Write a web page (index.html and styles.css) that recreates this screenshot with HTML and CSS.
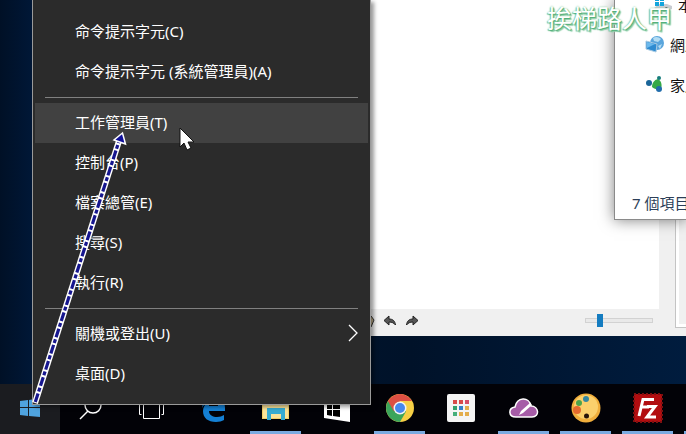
FILE: index.html
```
<!DOCTYPE html>
<html lang="zh-Hant">

<head>
    <meta charset="UTF-8">
    <meta name="viewport" content="width=device-width, initial-scale=1.0">
    <title>desktop</title>
    <link rel="stylesheet" href="styles.css">
</head>

<body>
    <main class="desktop">
        <!-- editor window -->
        <section class="window editor">
            <div class="editor-main">
                <div class="canvas"></div>
                <div class="toolbar">
                    <button class="tool" aria-label="pen">
                        <svg width="14" height="14" viewBox="0 0 14 14"><path d="M5 1l5 1 3 4-3 7-3-1 2-5z" fill="#b9a985" stroke="#333" /></svg>
                    </button>
                    <button class="tool" aria-label="undo">
                        <svg width="14" height="14" viewBox="0 0 14 14"><path d="M1 6.500L6 2v3c4 0 6 2 6.500 6C11 9 9 8 6 8v3z" fill="#555" stroke="#222" /></svg>
                    </button>
                    <button class="tool" aria-label="redo">
                        <svg width="14" height="14" viewBox="0 0 14 14"><path d="M13 6.500L8 2v3c-4 0-6 2-6.500 6C3 9 5 8 8 8v3z" fill="#555" stroke="#222" /></svg>
                    </button>
                    <input class="zoom" type="range" min="0" max="100" value="19" aria-label="zoom">
                </div>
            </div>
            <aside class="side"><div class="side-box"></div></aside>
        </section>

        <!-- file explorer window -->
        <section class="window explorer">
            <ul class="tree">
                <li class="tree-item child">
                    <svg width="22" height="20" viewBox="0 0 22 20">
                        <path d="M2 14l5-4h8l5 2v3l-8 3-9-3z" fill="#c9ccd2" />
                        <path d="M3 14l8 2 3-3 2 1-3 4-10-3z" fill="#3c4047" />
                        <path d="M3 3h4v4H3zM8 3h4v4H8zM3 8h4v4H3zM8 8h4v4H8z" fill="#12a5dc" />
                    </svg>
                    <span>本機磁碟</span>
                </li>
                <li class="tree-item">
                    <svg width="22" height="20" viewBox="0 0 22 20">
                        <circle cx="13" cy="9" r="7" fill="#5aa5dc" />
                        <path d="M9 4c3-2 6-1 8 1l-3 3-4-1zM14 12l4-2-2 5z" fill="#b3dcf3" />
                        <path d="M2 7l11 3-1 8-10-3z" fill="#2f8bd0" stroke="#a9cbe3" />
                        <path d="M3 8l8 2-8 4z" fill="#6cb9ec" />
                    </svg>
                    <span>網路</span>
                </li>
                <li class="tree-item">
                    <svg width="22" height="20" viewBox="0 0 22 20">
                        <path d="M8 13c0-4 2-7 6-8 4 2 4 7 3 10-3 1-7 0-9-2z" fill="#35a947" />
                        <circle cx="15" cy="4" r="2" fill="#167d7c" />
                        <circle cx="5" cy="9" r="3" fill="#1a6598" />
                        <circle cx="15" cy="15" r="3" fill="#216dac" />
                    </svg>
                    <span>家用群組</span>
                </li>
            </ul>
            <footer class="status">7 個項目</footer>
        </section>

        <p class="watermark">挨梯路人甲</p>
    </main>

    <nav class="taskbar">
        <button class="task start" aria-label="開始">
            <svg width="20" height="20" viewBox="0 0 20 20"><path d="M0 3l8-1v7H0zM9 2l11-2v9H9zM0 10h8v8l-8-1zM9 10h11v9L9 18z" fill="#4fa3df" /></svg>
        </button>
        <button class="task" aria-label="搜尋">
            <svg width="24" height="28" viewBox="0 0 24 28"><circle cx="14" cy="11" r="8" fill="none" stroke="#fff" stroke-width="1.500" /><path d="M9 17l-8 8" stroke="#fff" stroke-width="1.500" /></svg>
        </button>
        <button class="task view" aria-label="工作檢視">
            <svg width="26" height="26" viewBox="0 0 26 26"><path d="M4.500 2.500h16v21h-16zM2.500 6.500H.5v13h2M22.500 6.500h2v13h-2" fill="none" stroke="#fff" /></svg>
        </button>
        <button class="task" aria-label="Edge">
            <svg width="26" height="30" viewBox="0 0 26 30"><path d="M2 15C3 7 8 3 14 3c7 0 11 5 11 12v3H9c0 4 4 6 8 6 3 0 5-1 7-2v5c-2 1-5 2-8 2C8 29 3 25 3 18c0-4 2-7 6-9-4 1-6 4-7 6zM9 13h9c0-3-1-5-4-5s-5 2-5 5z" fill="#1480d4" /></svg>
        </button>
        <button class="task open" aria-label="檔案總管">
            <svg width="28" height="24" viewBox="0 0 28 24">
                <path d="M0 1h10l2 3h15v19H0z" fill="#f2cf68" />
                <path d="M1 8h25v14H1z" fill="#fbe49a" />
                <path d="M5 12h18v12h-4v-6H9v6H5z" fill="#37acd2" />
            </svg>
        </button>
        <button class="task" aria-label="市集">
            <svg width="28" height="30" viewBox="0 0 28 30">
                <path d="M1 5l26-2v26L1 25z" fill="#fff" />
                <path d="M4 11l5-1v6H4zM10 10l7-1v7h-7zM4 17h5v6l-5-1zM10 17h7v7l-7-1z" fill="#000" />
            </svg>
        </button>
        <button class="task open" aria-label="Chrome">
            <svg width="28" height="28" viewBox="0 0 28 28">
                <circle cx="14" cy="14" r="14" fill="#f6cf46" />
                <path d="M1.900 7A14 14 0 0 0 14 28l6-10.500-6-3.500z" fill="#3ba55b" />
                <path d="M1.900 7A14 14 0 0 1 26.100 7H14l-6 10.500z" fill="#dd4f43" />
                <circle cx="14" cy="14" r="6.500" fill="#f4f4f4" />
                <circle cx="14" cy="14" r="5" fill="#4788ee" />
            </svg>
        </button>
        <button class="task" aria-label="應用程式">
            <svg width="28" height="28" viewBox="0 0 28 28">
                <rect width="28" height="28" rx="2" fill="#f4f4f4" />
                <path d="M6 6h4v4H6zM12 6h4v4h-4z" fill="#d84a48" />
                <path d="M18 6h4v4h-4z" fill="#d64d67" />
                <path d="M6 12h4v4H6z" fill="#35a06b" />
                <path d="M12 12h4v4h-4z" fill="#347fc8" />
                <path d="M18 12h4v4h-4zM18 18h4v4h-4zM12 18h4v4h-4z" fill="#e3ad4b" />
                <path d="M6 18h4v4H6z" fill="#46ae7b" />
            </svg>
        </button>
        <button class="task open" aria-label="雲端筆記">
            <svg width="30" height="28" viewBox="0 0 30 28">
                <path d="M7 23c-8 0-8-9-1-10C8 3 20 2 22 12c8 0 9 11 1 11z" fill="#a65ca7" stroke="#fff" stroke-width="1.500" />
                <path d="M10 21l2-4 9-8 2 2-9 8z" fill="#fff" />
            </svg>
        </button>
        <button class="task open" aria-label="小畫家">
            <svg width="30" height="30" viewBox="0 0 30 30">
                <circle cx="15" cy="15" r="14.500" fill="#f0ae3c" />
                <circle cx="15" cy="14" r="12" fill="#fbd06c" />
                <circle cx="15" cy="6" r="3" fill="#3587a0" />
                <circle cx="8" cy="10" r="3" fill="#4ca34b" />
                <circle cx="6" cy="17" r="4" fill="#e46a2e" />
                <circle cx="15.500" cy="23" r="2.500" fill="#271408" />
            </svg>
        </button>
        <button class="task open" aria-label="FileZilla">
            <svg width="30" height="30" viewBox="0 0 30 30">
                <rect x="1" y="1" width="28" height="28" fill="#b20d10" stroke="#7c1010" stroke-width="2" stroke-dasharray="2 2" />
                <path d="M6 23L10 6.500h11M8 14h8M14 13.500h8L14 24h9" fill="none" stroke="#fff" stroke-width="3" />
            </svg>
        </button>
        <button class="task open" aria-label="其他"></button>
    </nav>

    <!-- Win+X menu -->
    <ul class="menu">
        <li><button class="menu-item">命令提示字元(C)</button></li>
        <li><button class="menu-item">命令提示字元 (系統管理員)(A)</button></li>
        <li class="line"></li>
        <li><button class="menu-item active">工作管理員(T)</button></li>
        <li><button class="menu-item">控制台(P)</button></li>
        <li><button class="menu-item">檔案總管(E)</button></li>
        <li><button class="menu-item">搜尋(S)</button></li>
        <li><button class="menu-item">執行(R)</button></li>
        <li class="line"></li>
        <li>
            <button class="menu-item">關機或登出(U)
                <svg width="10" height="18" viewBox="0 0 10 18"><path d="M1 1l8 8-8 8" fill="none" stroke="#fff" stroke-width="1.300" /></svg>
            </button>
        </li>
        <li><button class="menu-item">桌面(D)</button></li>
    </ul>

    <!-- arrow from the start button to the task manager item -->
    <svg class="arrow" width="100" height="280" viewBox="0 0 100 280">
        <path d="M5 275L89 13" stroke="#fff" stroke-width="6" />
        <path d="M5.300 274L89 13" stroke="#16168f" stroke-width="3.200" stroke-dasharray="9 2 4 2" />
        <path d="M92.500 5L84 12l11.500 4z" fill="#10109a" stroke="#fff" stroke-width="1.500" />
    </svg>
    <svg class="cursor" width="16" height="25" viewBox="0 0 16 25">
        <path d="M1 1v19l4-4 3 7 4-2-3-6h6z" fill="#fff" stroke="#111" />
    </svg>
</body>

</html>
```
FILE: styles.css
```
* {
    box-sizing: border-box;
}

html,
body {
    height: 100%;
    margin: 0;
    padding: 0;
}

body {
    position: relative;
    display: flex;
    flex-direction: column;
    overflow: hidden;
    background: #000;
    font-family: "Noto Sans", "Noto Sans CJK TC", sans-serif;
    font-size: 15px;
}

ul {
    margin: 0;
    padding: 0;
    list-style: none;
}

button {
    padding: 0;
    border: 0;
    background: none;
    font: inherit;
}

.desktop {
    position: relative;
    flex: 1;
    overflow: hidden;
    background: linear-gradient(90deg, #001026, #001838 5%, #001229 60%, #001c3e);
}

/* windows */
.window {
    position: absolute;
    display: flex;
}

.editor {
    top: 0;
    right: 0;
    bottom: 48px;
    left: 340px;
    background: #f0f0f0;
}

.editor-main {
    flex: 1;
    display: flex;
    flex-direction: column;
}

.canvas {
    flex: 1;
    background: #fff;
}

.toolbar {
    display: flex;
    align-items: center;
    gap: 8px;
    height: 27px;
    padding: 0 6px 4px 21px;
}

.tool {
    display: flex;
}

.zoom {
    width: 68px;
    height: 14px;
    margin: 0 0 0 auto;
    background: none;
    appearance: none;
}

.zoom::-webkit-slider-runnable-track {
    height: 5px;
    border: 1px solid #d2d2d2;
    background: #e9e9e9;
}

.zoom::-webkit-slider-thumb {
    width: 6px;
    height: 13px;
    margin-top: -5px;
    background: #147cc0;
    appearance: none;
}

.side {
    width: 27px;
    padding: 0 0 8px 16px;
}

.side-box {
    height: 100%;
    border: solid #c4c4c4;
    border-width: 0 0 1px 1px;
    background: #f0f0f0;
    box-shadow: inset 3px -3px #fff;
}

.explorer {
    top: 0;
    right: 0;
    width: 72px;
    height: 220px;
    flex-direction: column;
    justify-content: space-between;
    overflow: hidden;
    border: solid #8a8a8a;
    border-width: 0 0 1px 1px;
    background: #fff;
    box-shadow: 0 0 14px rgba(0, 0, 0, .5);
    white-space: nowrap;
}

.tree {
    margin-top: -16px;
    padding-left: 29px;
}

.tree-item {
    display: flex;
    align-items: center;
    gap: 4px;
    height: 40px;
    color: #111;
}

.child {
    padding-left: 8px;
}

.tree-item svg {
    flex: none;
}

.status {
    padding: 0 0 6px 17px;
    color: #2c3e57;
}

.watermark {
    position: absolute;
    top: 0;
    right: 14px;
    margin: 0;
    color: #fff;
    font-size: 25px;
    line-height: 36px;
    text-shadow: 1px 1px 1px #4fae78, -1px 1px 1px #7cc49a, 0 0 2px #7cc49a, 2px 2px 1px #9ad3b1;
}

/* taskbar */
.taskbar {
    display: flex;
    height: 50px;
    background: #020207;
    overflow: hidden;
}

.task {
    flex: none;
    display: flex;
    flex-direction: column;
    align-items: center;
    justify-content: center;
    width: 62px;
    border: solid transparent;
    border-width: 0 6px 0 5px;
    padding-bottom: 2px;
}

.task svg {
    flex: none;
}

.start {
    width: 60px;
    background: #1b1c20;
}

.view {
    width: 60px;
}

.open {
    background: linear-gradient(#7aaae0, #7aaae0) bottom / 100% 3px no-repeat;
    background-clip: padding-box;
    border-width: 0 5px 0 6px;
}

/* menu */
.menu {
    position: absolute;
    bottom: 29px;
    left: 32px;
    width: 339px;
    padding: 12px 2px 10px;
    border: solid #9a9a9a;
    border-width: 0 1px 1px;
    background: #2b2b2b;
    box-shadow: 3px 2px 4px rgba(0, 0, 0, .4);
}

.menu-item {
    display: flex;
    align-items: center;
    justify-content: space-between;
    width: 100%;
    height: 40px;
    padding: 0 10px 3px 40px;
    color: #fff;
    text-align: left;
    white-space: nowrap;
}

.active {
    background: #414141;
}

.line {
    height: 1px;
    margin: 5px 10px;
    background: #808080;
}

.arrow {
    position: absolute;
    bottom: 26px;
    left: 30px;
}

.cursor {
    position: absolute;
    top: 127px;
    left: 179px;
}
```
